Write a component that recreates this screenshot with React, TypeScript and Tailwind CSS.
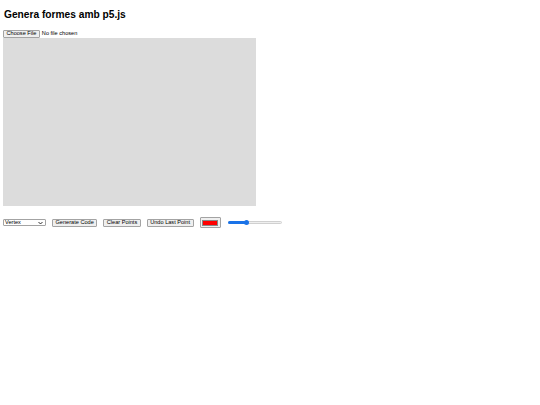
import { useState } from 'react'

const font = { fontFamily: '"Liberation Sans", Arial, sans-serif' }

function Btn({ label }: { label: string }) {
    return (
        <button className="h-[8px] px-[2.5px] bg-[#efefef] border border-[#a3a3a3] rounded-[1px] text-[5.6px] leading-none text-black flex items-center">
            {label}
        </button>
    )
}

export default function App() {
    const [val] = useState(35)

    return (
        <div className="w-[540px] h-[405px] bg-white text-black px-[3px]" style={font}>
            {/* Title */}
            <h1 className="pt-[9px] text-[10.2px] font-bold leading-[11px] pl-[1px]">Genera formes amb p5.js</h1>

            {/* File input */}
            <div className="mt-[10px] flex items-center gap-[2px]">
                <Btn label="Choose File" />
                <span className="text-[5.6px] leading-none">No file chosen</span>
            </div>

            {/* Canvas */}
            <div className="w-[253px] h-[168px] bg-[#dcdcdc]" />

            {/* Controls */}
            <div className="mt-[11px] flex items-center">
                <div className="w-[43px] h-[7px] border border-[#a3a3a3] rounded-[1px] bg-white flex items-center justify-between pl-[1px] pr-[2px] text-[5.6px] leading-none">
                    <span>Vertex</span>
                    <svg width="5" height="4" viewBox="0 0 10 8">
                        <path d="M1 2l4 4 4-4" fill="none" stroke="#000" strokeWidth="1.6" />
                    </svg>
                </div>
                <div className="ml-[6px]"><Btn label="Generate Code" /></div>
                <div className="ml-[6px]"><Btn label="Clear Points" /></div>
                <div className="ml-[6px]"><Btn label="Undo Last Point" /></div>
                <div className="ml-[6px] w-[21px] h-[11px] border border-[#a3a3a3] rounded-[1px] bg-[#efefef] p-[1.5px]">
                    <div className="w-full h-full bg-[#ff0000] border border-[#888]" />
                </div>
                <div className="ml-[7px] relative w-[54px] h-[6px] flex items-center">
                    <div className="w-full h-[2.5px] rounded-full bg-[#efefef] border border-[#d0d0d0]" />
                    <div className="absolute left-0 h-[2.5px] rounded-full bg-[#1a73e8]" style={{ width: `${val}%` }} />
                    <div className="absolute top-[0.5px] w-[5px] h-[5px] rounded-full bg-[#1a73e8]" style={{ left: `calc(${val}% - 2px)` }} />
                </div>
            </div>
        </div>
    )
}
